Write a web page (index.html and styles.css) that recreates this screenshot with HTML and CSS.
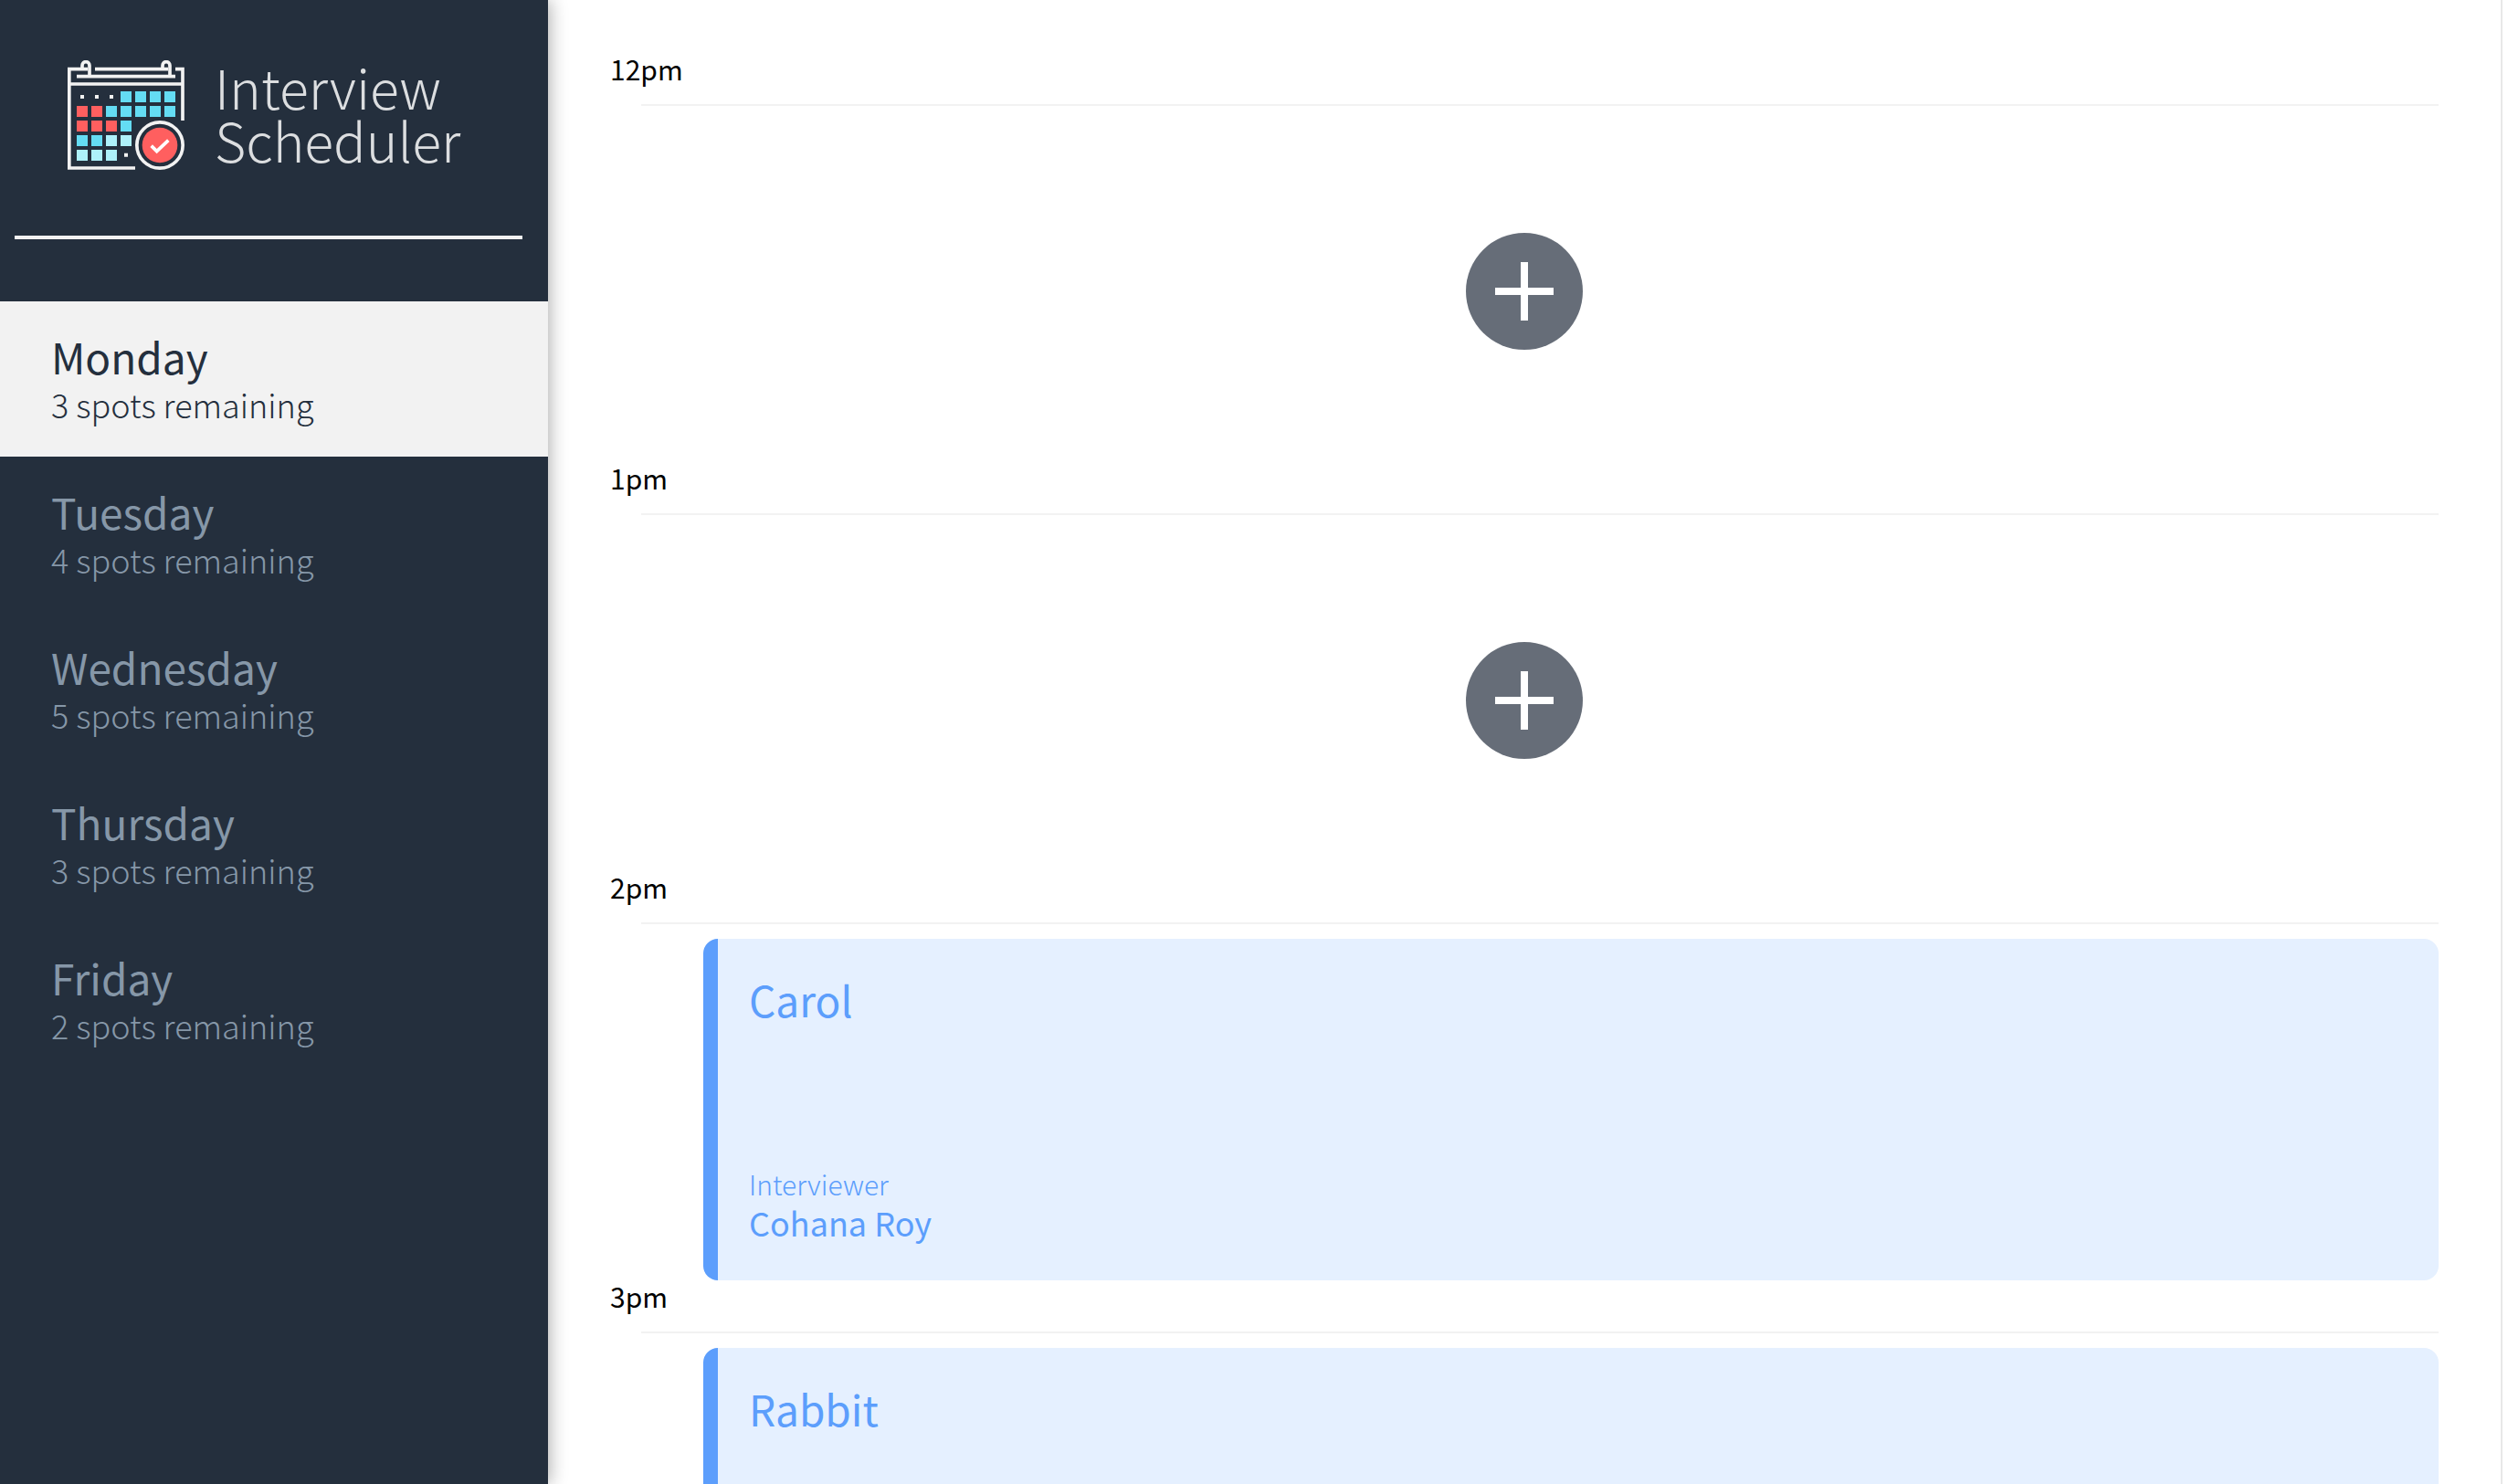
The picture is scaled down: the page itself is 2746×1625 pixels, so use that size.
FILE: index.html
```html
<!DOCTYPE html>
<html lang="en">
<head>
<meta charset="utf-8">
<title>Interview Scheduler</title>
<link rel="stylesheet" href="styles.css">
</head>
<body>
<div class="layout">
  <aside class="sidebar">
    <h1 class="logo">
      <svg class="logo__icon" viewBox="42 48 384 360" aria-hidden="true">
        <g fill="none" stroke="#f2f2f2" stroke-width="11">
          <path d="M114 101V65a12 12 0 0 0-24 0V77H47.500V402H264M89 77H108M378 101V65a12 12 0 0 0-24 0V77H132M396 77H420V246M354 77H372M72 101H396M48 126H420"/>
          <circle cx="345" cy="327" r="75.500"/>
        </g>
        <path fill="#f2f2f2" d="M84 162h12v12h-12zM132 162h12v12h-12zM180 162h12v12h-12zM228 353h12v12h-12z"/>
        <path fill="#64dcf3" d="M216 150h36v36h-36zM264 150h36v36h-36zM312 150h36v36h-36zM360 150h36v36h-36zM168 198h36v36h-36zM216 198h36v36h-36zM264 198h36v36h-36zM312 198h36v36h-36zM360 198h36v36h-36zM216 246h36v36h-36zM72 294h36v36h-36zM120 294h36v36h-36z"/>
        <path fill="#ff5f5f" d="M72 198h36v36h-36zM120 198h36v36h-36zM72 246h36v36h-36zM120 246h36v36h-36zM168 246h36v36h-36z"/>
        <path fill="#aef1fa" d="M168 294h36v36h-36zM216 294h36v36h-36zM72 342h36v36h-36zM120 342h36v36h-36zM168 342h36v36h-36z"/>
        <circle cx="345" cy="327" r="58" fill="#ff5f5f"/>
        <path d="M317 329L335 347L373 311" fill="none" stroke="#fff" stroke-width="11"/>
      </svg>
      <span class="logo__text">Interview<br>Scheduler</span>
    </h1>
    <hr class="sidebar__separator">
    <nav class="days">
      <button class="day day--selected" type="button"><span class="day__name">Monday</span><span class="day__spots">3 spots remaining</span></button>
      <button class="day" type="button"><span class="day__name">Tuesday</span><span class="day__spots">4 spots remaining</span></button>
      <button class="day" type="button"><span class="day__name">Wednesday</span><span class="day__spots">5 spots remaining</span></button>
      <button class="day" type="button"><span class="day__name">Thursday</span><span class="day__spots">3 spots remaining</span></button>
      <button class="day" type="button"><span class="day__name">Friday</span><span class="day__spots">2 spots remaining</span></button>
    </nav>
  </aside>
  <main class="schedule">
    <section class="slot">
      <header class="slot__header"><h2 class="slot__time">12pm</h2><hr class="slot__line"></header>
      <div class="slot__empty">
        <button class="add" type="button" aria-label="Add appointment"><svg class="add__icon" viewBox="0 0 128 128"><circle cx="64" cy="64" r="64" fill="#666d78"/><path d="M64 32V96M32 64H96" stroke="#fff" stroke-width="8"/></svg></button>
      </div>
    </section>
    <section class="slot">
      <header class="slot__header"><h2 class="slot__time">1pm</h2><hr class="slot__line"></header>
      <div class="slot__empty">
        <button class="add" type="button" aria-label="Add appointment"><svg class="add__icon" viewBox="0 0 128 128"><circle cx="64" cy="64" r="64" fill="#666d78"/><path d="M64 32V96M32 64H96" stroke="#fff" stroke-width="8"/></svg></button>
      </div>
    </section>
    <section class="slot">
      <header class="slot__header"><h2 class="slot__time">2pm</h2><hr class="slot__line"></header>
      <article class="card">
        <h3 class="card__student">Carol</h3>
        <div><h4 class="card__label">Interviewer</h4><p class="card__interviewer">Cohana Roy</p></div>
      </article>
    </section>
    <section class="slot">
      <header class="slot__header"><h2 class="slot__time">3pm</h2><hr class="slot__line"></header>
      <article class="card">
        <h3 class="card__student">Rabbit</h3>
      </article>
    </section>
  </main>
</div>
</body>
</html>
```
FILE: styles.css
```css
* { box-sizing: border-box; }

body {
  margin: 0;
  background: #fff;
  color: #000;
  font-family: "Noto Sans CJK JP", "Noto Sans CJK SC", sans-serif;
}

h1, h2, h3, h4, p, hr { margin: 0; border: 0; font-weight: 400; }

button {
  padding: 0;
  border: 0;
  background: none;
  color: inherit;
  font: inherit;
  cursor: pointer;
}

.layout { display: flex; height: 100vh; overflow: hidden; }

.sidebar {
  flex: none;
  z-index: 1;
  width: 600px;
  background: #242f3d;
  box-shadow: 2px 0 18px rgba(0, 0, 0, 0.32);
}

.logo { display: flex; gap: 33px; padding: 66px 74px 72px; }
.logo__icon { flex: none; width: 128px; height: 120px; }
.logo__text { color: #dcdee0; font-size: 59px; font-weight: 300; line-height: 58px; }

.sidebar__separator { height: 4px; margin: 0 28px 68px 16px; background: #f2f2f2; }

.days { display: flex; flex-direction: column; }

.day {
  display: flex;
  flex-direction: column;
  height: 170px;
  padding: 32px 56px;
  color: #8697a8;
  text-align: left;
}
.day--selected { background: #f2f2f2; color: #242f3d; }
.day__name { font-size: 46px; line-height: 56px; }
.day__spots { font-size: 36px; font-weight: 300; line-height: 48px; }

.schedule {
  flex: 1;
  overflow: hidden;
  padding: 58px 68px 0;
  border-right: 2px solid #e8e8e8;
  margin-right: 6px;
}

.slot__header { display: flex; flex-direction: column; height: 58px; }
.slot__time { flex: 1; font-size: 30px; line-height: 34px; }
.slot__line { height: 2px; margin-left: 34px; background: #f2f2f2; }

.slot__empty {
  display: flex;
  align-items: center;
  justify-content: center;
  height: 374px;
  margin-top: 16px;
}
.add { width: 128px; height: 128px; border-radius: 50%; }
.add__icon { display: block; }

.card {
  display: flex;
  flex-direction: column;
  justify-content: space-between;
  height: 374px;
  margin: 16px 0 0 102px;
  padding: 34px 34px 40px;
  border-left: 16px solid #5c9efc;
  border-radius: 16px;
  background: #e5f0ff;
  color: #5c9efc;
}
.card__student { font-size: 46px; line-height: 64px; }
.card__label { font-size: 30px; font-weight: 300; line-height: 36px; }
.card__interviewer { font-size: 36px; line-height: 48px; }
```
